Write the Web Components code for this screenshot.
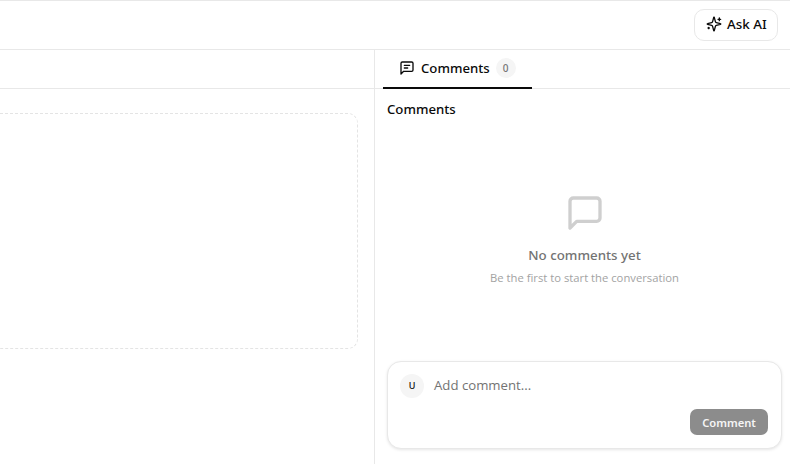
<!DOCTYPE html>
<html>
<head>
<meta charset="utf-8">
<style>
  html, body { margin: 0; height: 100%; overflow: hidden; background: #fff; }
  body { font-family: "Noto Sans", sans-serif; color: #0a0a0a; }
</style>
</head>
<body>
<app-shell>
  <top-bar></top-bar>
  <main-pane></main-pane>
  <comments-panel></comments-panel>
</app-shell>
<script>
class AppShell extends HTMLElement {
    connectedCallback() {
        this.attachShadow({ mode: 'open' });
        this.shadowRoot.innerHTML = `
            <style>
                :host {
                    display: grid;
                    grid-template-columns: 375px 415px;
                    grid-template-rows: 50px 414px;
                    width: 790px;
                    height: 464px;
                    overflow: hidden;
                }
                ::slotted(top-bar) { grid-column: 1 / 3; }
            </style>
            <slot></slot>
        `;
    }
}

class TopBar extends HTMLElement {
    connectedCallback() {
        this.attachShadow({ mode: 'open' });
        this.shadowRoot.innerHTML = `
            <style>
                :host {
                    display: flex;
                    justify-content: flex-end;
                    align-items: center;
                    box-sizing: border-box;
                    border-top: 1px solid #e8e8e8;
                    border-bottom: 1px solid #e8e8e8;
                    padding-right: 12px;
                }
                button {
                    display: flex;
                    align-items: center;
                    gap: 5px;
                    box-sizing: border-box;
                    width: 84px;
                    height: 32px;
                    padding: 0 0 2px 11px;
                    background: #fff;
                    border: 1px solid #e8e8e8;
                    border-radius: 10px;
                    font: 500 13.4px "Noto Sans", sans-serif;
                    color: #0a0a0a;
                }
                svg { display: block; }
            </style>
            <button>
                <svg width="16" height="16" viewBox="0 0 24 24" fill="none" stroke="#0a0a0a" stroke-width="2" stroke-linecap="round" stroke-linejoin="round">
                    <path d="M9.9 15.5a2 2 0 0 0-1.4-1.4l-6.1-1.6a.5.5 0 0 1 0-1l6.1-1.6a2 2 0 0 0 1.4-1.4l1.6-6.1a.5.5 0 0 1 1 0l1.6 6.1a2 2 0 0 0 1.4 1.4l6.1 1.6a.5.5 0 0 1 0 1l-6.1 1.6a2 2 0 0 0-1.4 1.4l-1.6 6.1a.5.5 0 0 1-1 0z"/>
                    <path d="M20 3v4M22 5h-4M4 17v2M5 18H3"/>
                </svg>
                Ask AI
            </button>
        `;
    }
}

class MainPane extends HTMLElement {
    connectedCallback() {
        this.attachShadow({ mode: 'open' });
        this.shadowRoot.innerHTML = `
            <style>
                :host {
                    display: block;
                    box-sizing: border-box;
                    border-right: 1px solid #e8e8e8;
                    overflow: hidden;
                }
                .head {
                    height: 39px;
                    box-sizing: border-box;
                    border-bottom: 1px solid #e8e8e8;
                }
                .drop {
                    box-sizing: border-box;
                    height: 236px;
                    margin: 24px 16px 0 -40px;
                    border: 1px dashed #e4e4e4;
                    border-radius: 10px;
                }
            </style>
            <div class="head"></div>
            <div class="drop"></div>
        `;
    }
}

class CommentsPanel extends HTMLElement {
    connectedCallback() {
        this.attachShadow({ mode: 'open' });
        this.shadowRoot.innerHTML = `
            <style>
                :host {
                    display: flex;
                    flex-direction: column;
                    min-height: 0;
                }
                .tabs {
                    height: 39px;
                    box-sizing: border-box;
                    border-bottom: 1px solid #e8e8e8;
                    padding-left: 8px;
                    display: flex;
                }
                .tab {
                    display: flex;
                    align-items: center;
                    box-sizing: border-box;
                    width: 149px;
                    height: 39px;
                    padding: 0 0 2px 16px;
                    border-bottom: 2px solid #0a0a0a;
                    font-size: 13.2px;
                    font-weight: 500;
                }
                .tab svg { display: block; margin-right: 6px; }
                .count {
                    width: 20px;
                    height: 20px;
                    margin-left: 6px;
                    border-radius: 50%;
                    background: #f5f5f5;
                    color: #737373;
                    font-size: 10px;
                    line-height: 20px;
                    text-align: center;
                }
                .body {
                    flex: 1;
                    min-height: 0;
                    display: flex;
                    flex-direction: column;
                    padding: 11px 8px 15px 12px;
                }
                h2 {
                    margin: 0;
                    font-size: 13.2px;
                    font-weight: 500;
                    line-height: 18px;
                }
                .empty {
                    flex: 1;
                    display: flex;
                    flex-direction: column;
                    align-items: center;
                    padding-top: 75px;
                }
                .empty svg { display: block; }
                .title {
                    margin-top: 12px;
                    font-size: 13.3px;
                    font-weight: 500;
                    line-height: 20px;
                    color: #737373;
                }
                .sub {
                    margin-top: 5px;
                    font-family: "Open Sans", sans-serif;
                    font-size: 11.25px;
                    line-height: 16px;
                    color: #a3a3a3;
                }
                .box {
                    box-sizing: border-box;
                    height: 88px;
                    border: 1px solid #e8e8e8;
                    border-radius: 14px;
                    box-shadow: 0 1px 3px rgba(0,0,0,0.1);
                    padding: 12px 13px 12px 12px;
                    display: flex;
                    flex-direction: column;
                    justify-content: space-between;
                    background: #fff;
                }
                .row { display: flex; align-items: center; gap: 10px; }
                .avatar {
                    width: 24px;
                    height: 24px;
                    border-radius: 50%;
                    background: #f5f5f5;
                    font-size: 9px;
                    font-weight: 500;
                    line-height: 24px;
                    text-align: center;
                }
                .placeholder { font-family: "Open Sans", sans-serif; font-size: 13.2px; color: #737373; line-height: 20px; position: relative; top: -1px; }
                .actions { display: flex; justify-content: flex-end; margin-bottom: 1px; }
                button {
                    width: 78px;
                    height: 26px;
                    padding: 0;
                    border: 0;
                    border-radius: 7px;
                    background: #8c8c8c;
                    color: #f5f5f5;
                    font: 600 11.2px "Noto Sans", sans-serif;
                }
            </style>
            <div class="tabs">
                <div class="tab">
                    <svg width="16" height="16" viewBox="0 0 24 24" fill="none" stroke="#0a0a0a" stroke-width="2" stroke-linecap="round" stroke-linejoin="round">
                        <path d="M21 15a2 2 0 0 1-2 2H7l-4 4V5a2 2 0 0 1 2-2h14a2 2 0 0 1 2 2z"/>
                        <path d="M8 8h8M8 12h5"/>
                    </svg>
                    Comments
                    <span class="count">0</span>
                </div>
            </div>
            <div class="body">
                <h2>Comments</h2>
                <div class="empty">
                    <svg width="40" height="40" viewBox="0 0 24 24" fill="none" stroke="#cfcfcf" stroke-width="2" stroke-linecap="round" stroke-linejoin="round">
                        <path d="M21 15a2 2 0 0 1-2 2H7l-4 4V5a2 2 0 0 1 2-2h14a2 2 0 0 1 2 2z"/>
                    </svg>
                    <div class="title">No comments yet</div>
                    <div class="sub">Be the first to start the conversation</div>
                </div>
                <div class="box">
                    <div class="row">
                        <div class="avatar">U</div>
                        <div class="placeholder">Add comment...</div>
                    </div>
                    <div class="actions"><button>Comment</button></div>
                </div>
            </div>
        `;
    }
}

customElements.define('app-shell', AppShell);
customElements.define('top-bar', TopBar);
customElements.define('main-pane', MainPane);
customElements.define('comments-panel', CommentsPanel);
</script>
</body>
</html>
